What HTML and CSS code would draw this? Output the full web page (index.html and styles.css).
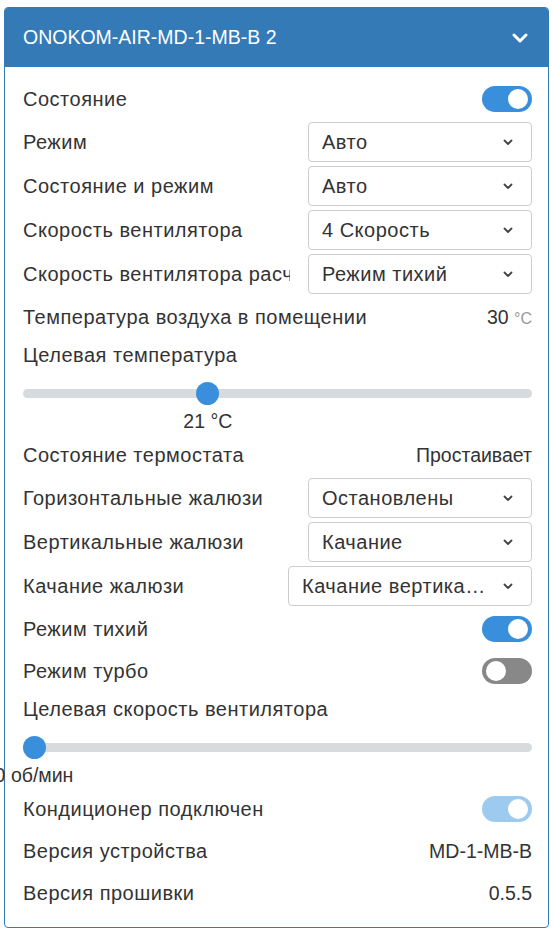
FILE: index.html
```html
<!DOCTYPE html>
<html lang="ru">
<head>
<meta charset="utf-8">
<link rel="stylesheet" href="styles.css">
</head>
<body>
<div class="page">
  <div class="card">
    <div class="card-header">
      <span class="title">ONOKOM-AIR-MD-1-MB-B 2</span>
      <svg class="hdr-chev" width="16" height="10" viewBox="0 0 16 10"><path d="M2 2 L8 8 L14 2" fill="none" stroke="#fff" stroke-width="3" stroke-linecap="round" stroke-linejoin="round"/></svg>
    </div>
    <div class="card-body">
      <div class="row"><span class="label">Состояние</span><span class="toggle on"><span class="knob"></span></span></div>
      <div class="row sel-row"><span class="label">Режим</span><div class="select"><span class="sel-text">Авто</span><svg class="sel-chev" width="10" height="7" viewBox="0 0 10 7"><path d="M1.5 1.5 L5 5 L8.5 1.5" fill="none" stroke="#444" stroke-width="1.8" stroke-linecap="round" stroke-linejoin="round"/></svg></div></div>
      <div class="row sel-row"><span class="label">Состояние и режим</span><div class="select"><span class="sel-text">Авто</span><svg class="sel-chev" width="10" height="7" viewBox="0 0 10 7"><path d="M1.5 1.5 L5 5 L8.5 1.5" fill="none" stroke="#444" stroke-width="1.8" stroke-linecap="round" stroke-linejoin="round"/></svg></div></div>
      <div class="row sel-row"><span class="label">Скорость вентилятора</span><div class="select"><span class="sel-text">4 Скорость</span><svg class="sel-chev" width="10" height="7" viewBox="0 0 10 7"><path d="M1.5 1.5 L5 5 L8.5 1.5" fill="none" stroke="#444" stroke-width="1.8" stroke-linecap="round" stroke-linejoin="round"/></svg></div></div>
      <div class="row sel-row"><span class="label">Скорость вентилятора расчетная</span><div class="select"><span class="sel-text">Режим тихий</span><svg class="sel-chev" width="10" height="7" viewBox="0 0 10 7"><path d="M1.5 1.5 L5 5 L8.5 1.5" fill="none" stroke="#444" stroke-width="1.8" stroke-linecap="round" stroke-linejoin="round"/></svg></div></div>
      <div class="row"><span class="label">Температура воздуха в помещении</span><span class="value">30 <span class="unit">°C</span></span></div>
      <div class="slider-block">
        <div class="slider-label">Целевая температура</div>
        <div class="track"><span class="thumb" style="left: calc(11px + (100% - 22px) * 0.357)"></span></div>
        <div class="slider-value-line"><span class="slider-value" style="left: calc(11px + (100% - 22px) * 0.357)">21 °C</span></div>
      </div>
      <div class="row"><span class="label">Состояние термостата</span><span class="value">Простаивает</span></div>
      <div class="row sel-row"><span class="label">Горизонтальные жалюзи</span><div class="select"><span class="sel-text">Остановлены</span><svg class="sel-chev" width="10" height="7" viewBox="0 0 10 7"><path d="M1.5 1.5 L5 5 L8.5 1.5" fill="none" stroke="#444" stroke-width="1.8" stroke-linecap="round" stroke-linejoin="round"/></svg></div></div>
      <div class="row sel-row"><span class="label">Вертикальные жалюзи</span><div class="select"><span class="sel-text">Качание</span><svg class="sel-chev" width="10" height="7" viewBox="0 0 10 7"><path d="M1.5 1.5 L5 5 L8.5 1.5" fill="none" stroke="#444" stroke-width="1.8" stroke-linecap="round" stroke-linejoin="round"/></svg></div></div>
      <div class="row sel-row"><span class="label">Качание жалюзи</span><div class="select wide"><span class="sel-text">Качание вертикальное</span><svg class="sel-chev" width="10" height="7" viewBox="0 0 10 7"><path d="M1.5 1.5 L5 5 L8.5 1.5" fill="none" stroke="#444" stroke-width="1.8" stroke-linecap="round" stroke-linejoin="round"/></svg></div></div>
      <div class="row"><span class="label">Режим тихий</span><span class="toggle on"><span class="knob"></span></span></div>
      <div class="row"><span class="label">Режим турбо</span><span class="toggle off"><span class="knob"></span></span></div>
      <div class="slider-block">
        <div class="slider-label">Целевая скорость вентилятора</div>
        <div class="track"><span class="thumb" style="left: 11px"></span></div>
        <div class="slider-value-line"><span class="slider-value" style="left: 11px">0 об/мин</span></div>
      </div>
      <div class="row"><span class="label">Кондиционер подключен</span><span class="toggle on disabled"><span class="knob"></span></span></div>
      <div class="row"><span class="label">Версия устройства</span><span class="value">MD-1-MB-B</span></div>
      <div class="row"><span class="label">Версия прошивки</span><span class="value">0.5.5</span></div>
    </div>
  </div>
</div>
</body>
</html>
```
FILE: styles.css
```css
* { box-sizing: border-box; }
html, body { margin: 0; padding: 0; background: #fff; }
body {
  font-family: "Liberation Sans", Arial, sans-serif;
  font-size: 19.5px;
  color: #333;
}
.page { padding: 7px 4px 0 4px; }
.card {
  border: 1px solid #337ab7;
  border-radius: 4px;
  overflow: visible;
}
.card-header {
  background: #337ab7;
  color: #fff;
  height: 59px;
  display: flex;
  align-items: center;
  justify-content: space-between;
  padding: 0 20px 0 18px;
  border-radius: 3px 3px 0 0;
}
.title { font-size: 19.5px; }
.hdr-chev { display: block; }
.card-body {
  padding: 13px 16px 15px 18px;
  display: flex;
  flex-direction: column;
  gap: 4px;
}
.row {
  display: flex;
  align-items: center;
  justify-content: space-between;
  height: 38px;
  gap: 18px;
}
.row.sel-row { height: 40px; }
.label, .sel-text, .slider-label {
  font-size: 20px;
  letter-spacing: 0.5px;
}
.label {
  flex: 1 1 auto;
  min-width: 0;
  white-space: nowrap;
  overflow: hidden;
}
.value { white-space: nowrap; }
.unit { color: #999; font-size: 16px; }
.select {
  flex: 0 0 224px;
  height: 40px;
  border: 1px solid #ccc;
  border-radius: 4px;
  display: flex;
  align-items: center;
  justify-content: space-between;
  padding: 0 18px 0 13px;
  min-width: 0;
}
.select.wide { flex-basis: 244px; }
.sel-text { white-space: nowrap; overflow: hidden; text-overflow: ellipsis; min-width: 0; }
.sel-chev { flex: 0 0 auto; margin-left: 8px; }
.toggle {
  position: relative;
  width: 50px;
  height: 26px;
  border-radius: 13px;
  flex: 0 0 auto;
}
.toggle.on { background: #3a8fdc; }
.toggle.on.disabled { background: #9dcbf0; }
.toggle.off { background: #888; }
.knob {
  position: absolute;
  top: 3px;
  width: 20px;
  height: 20px;
  border-radius: 50%;
  background: #fff;
}
.toggle.on .knob { right: 4px; }
.toggle.off .knob { left: 4px; }
.slider-block { display: flex; flex-direction: column; }
.slider-label { height: 30px; line-height: 30px; white-space: nowrap; }
.track {
  position: relative;
  height: 9px;
  margin: 19px 0 11px 0;
  border-radius: 5px;
  background: #d7dbde;
}
.thumb {
  position: absolute;
  top: 50%;
  width: 23px;
  height: 23px;
  margin: -11.5px 0 0 -11.5px;
  border-radius: 50%;
  background: #3a8fdc;
}
.slider-value-line { position: relative; height: 23px; }
.slider-value {
  position: absolute;
  top: 0;
  line-height: 24px;
  transform: translateX(-50%);
  white-space: nowrap;
}
```
